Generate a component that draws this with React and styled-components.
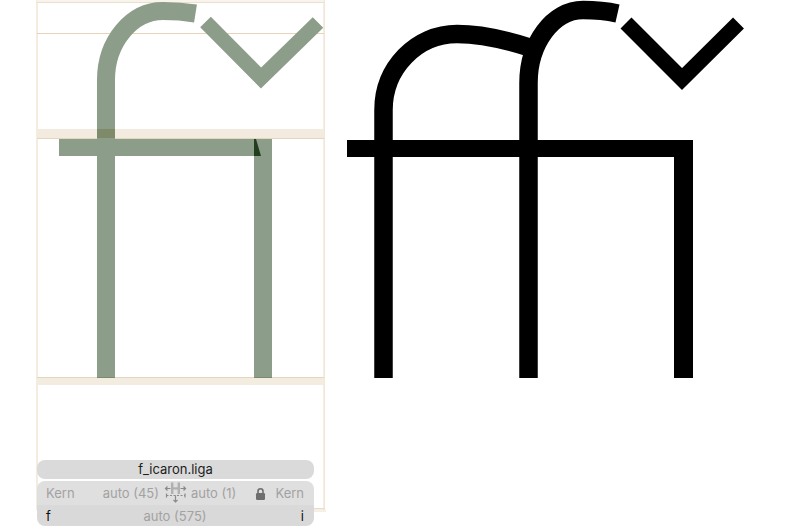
import React from "react";
import styled, { createGlobalStyle } from "styled-components";

const Global = createGlobalStyle`
  html, body { margin: 0; padding: 0; background: #ffffff; }
  body { font-family: Inter, "Liberation Sans", Arial, sans-serif; }
`;

const Editor = styled.div`
  position: relative;
  width: 801px;
  height: 530px;
  overflow: hidden;
  background: #ffffff;
`;

const Drawing = styled.svg`
  display: block;
  width: 801px;
  height: 530px;
`;

const InfoPanel = styled.div`
  position: absolute;
  left: 37px;
  top: 460px;
  width: 277px;
  display: flex;
  flex-direction: column;
  gap: 2px;
  font-family: Inter, "Liberation Sans", Arial, sans-serif;
  font-size: 13px;
`;

const TitleBar = styled.div`
  height: 19px;
  line-height: 19px;
  border-radius: 8px;
  background: #dadada;
  color: #1c1c1c;
  text-align: center;
`;

const MetricsCard = styled.div`
  border-radius: 8px;
  overflow: hidden;
  display: flex;
  flex-direction: column;
`;

const Row = styled.div`
  display: grid;
  grid-template-columns: 1fr auto 1fr;
  align-items: center;
  height: ${(p) => p.$h}px;
  padding: 0 10px 0 9px;
  background: ${(p) => p.$bg};
`;

const Side = styled.div`
  display: flex;
  align-items: center;
  justify-content: ${(p) => p.$justify || "space-between"};
`;

const Label = styled.span`
  color: ${(p) => (p.$dark ? "#111111" : "#a2a2a2")};
  white-space: nowrap;
`;

const RightGroup = styled.span`
  display: flex;
  align-items: center;
  gap: 9px;
`;

const IconSlot = styled.span`
  display: block;
  margin: 0 3px 0 5px;
`;

const KernIcon = () => (
  <IconSlot>
    <svg width="24" height="24" viewBox="0 0 24 24" style={{ display: "block" }}>
      <g fill="#b0b0b0">
        <rect x="7" y="1.5" width="2.4" height="11.5" />
        <rect x="13.6" y="1.5" width="2.4" height="11.5" />
        <rect x="7" y="6.3" width="9" height="2.2" />
      </g>
      <g stroke="#8a8a8a" strokeWidth="1.2" fill="none">
        <path d="M1.5 7.5 H6.5" />
        <path d="M3.5 5.5 L1.5 7.5 L3.5 9.5" />
        <path d="M16.5 7.5 H21.5" />
        <path d="M19.5 5.5 L21.5 7.5 L19.5 9.5" />
        <path d="M2.5 14.5 H21" strokeDasharray="2 1.5" />
        <path d="M2.5 12.5 V16.5 M21 12.5 V16.5" />
        <path d="M11.5 14.5 V21" />
        <path d="M9.5 19 L11.5 21 L13.5 19" />
      </g>
    </svg>
  </IconSlot>
);

const LockIcon = () => (
  <svg width="11" height="13" viewBox="0 0 11 13" style={{ display: "block" }}>
    <path d="M3 6 V4.2 A2.5 2.5 0 0 1 8 4.2 V6" stroke="#6e6e6e" strokeWidth="1.6" fill="none" />
    <rect x="1" y="6" width="9" height="7" rx="1.3" fill="#6e6e6e" />
  </svg>
);

const Metrics = () => (
  <g>
    <rect x="36" y="0" width="2" height="510" fill="#f3ecdf" />
    <rect x="323.5" y="0" width="1.2" height="510" fill="#ecdcc6" />
    <rect x="37" y="0" width="287" height="2" fill="#f8f3ec" />
    <rect x="37" y="2" width="287" height="1" fill="#ecdfcc" />
    <rect x="37" y="33" width="287" height="1" fill="#e6d3b9" />
    <rect x="37" y="508" width="288" height="1.5" fill="#eadcc8" />
    <rect x="38" y="509.5" width="288" height="2.5" fill="#f4efe7" />
  </g>
);

const Bands = () => (
  <g>
    <rect x="37" y="129" width="287" height="10" fill="#f3ebe0" />
    <rect x="37" y="138" width="287" height="1" fill="#e5d5bd" />
    <rect x="37" y="377" width="287" height="8" fill="#f3ece1" />
    <rect x="37" y="377" width="287" height="1" fill="#e5d5bd" />
  </g>
);

const GreenGlyph = () => (
  <g>
    <g stroke="#8c9e89" fill="none">
      <path d="M106 378 V80 C106 42 131.5 11 163 11 Q180 11 195.5 13.5" strokeWidth="18" />
      <path d="M205.5 22 L261 78 L318 22.5" strokeWidth="15" strokeLinejoin="miter" strokeMiterlimit="4" />
    </g>
    <g fill="#8c9e89">
      <rect x="59" y="139" width="202" height="17" />
      <rect x="254" y="139" width="18" height="239" />
    </g>
    <path d="M254 139 L256 139 L261 156 L254 156 Z" fill="#223d1d" />
  </g>
);

const BandOverlap = () => (
  <g fill="#7f8a6b">
    <rect x="97" y="129" width="18" height="9" />
    <rect x="97" y="377" width="18" height="1" />
    <rect x="254" y="377" width="18" height="1" />
  </g>
);

const BlackGlyph = () => (
  <g>
    <g stroke="#000" fill="none">
      <path d="M383.5 378 V110 C383.5 68 416.5 34 457 34 C482 34 506 40 528 47" strokeWidth="18.5" />
      <path d="M528.5 378 V83 C528.5 43 553 10 583 10 Q602 10 617.5 13.5" strokeWidth="18.5" />
      <path d="M626 23 L682 79 L738.5 23" strokeWidth="15.5" strokeLinejoin="miter" strokeMiterlimit="4" />
    </g>
    <g fill="#000">
      <rect x="347" y="140" width="346" height="17" />
      <rect x="674" y="140" width="19" height="238" />
    </g>
  </g>
);

export default function App() {
  return (
    <>
      <Global />
      <Editor>
        <Drawing viewBox="0 0 801 530">
          <Metrics />
          <Bands />
          <GreenGlyph />
          <BandOverlap />
          <BlackGlyph />
        </Drawing>
        <InfoPanel>
          <TitleBar>f_icaron.liga</TitleBar>
          <MetricsCard>
            <Row $h={24} $bg="#dfdfdf">
              <Side>
                <Label>Kern</Label>
                <Label>auto (45)</Label>
              </Side>
              <KernIcon />
              <Side>
                <Label>auto (1)</Label>
                <RightGroup>
                  <LockIcon />
                  <Label>Kern</Label>
                </RightGroup>
              </Side>
            </Row>
            <Row $h={21} $bg="#d9d9d9">
              <Side>
                <Label $dark>f</Label>
              </Side>
              <Label>auto (575)</Label>
              <Side $justify="flex-end">
                <Label $dark>i</Label>
              </Side>
            </Row>
          </MetricsCard>
        </InfoPanel>
      </Editor>
    </>
  );
}
